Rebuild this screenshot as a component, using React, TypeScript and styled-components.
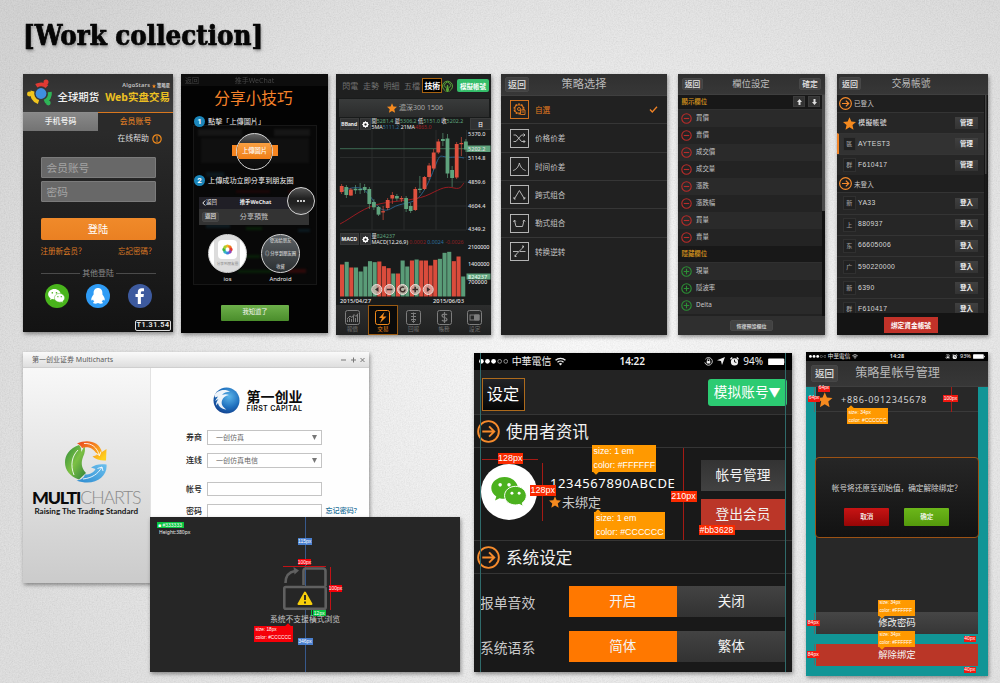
import React from "react";
import styled, { createGlobalStyle, css } from "styled-components";

const Global = createGlobalStyle`
  *, *::before, *::after { box-sizing: border-box; }
  html, body { margin: 0; padding: 0; }
  body {
    font-family: "Noto Sans", "Noto Sans CJK SC", sans-serif;
    line-height: 1;
    color: #ddd;
    white-space: nowrap;
    overflow: hidden;
    background: #d6d6d6;
  }
  svg { display: block; flex: none; }
  h1, h2, p { margin: 0; font-weight: 400; }
`;

/* ---------- page ---------- */

const Page = styled.main`
  position: relative;
  width: 1000px;
  height: 683px;
  overflow: hidden;
  background:
    radial-gradient(ellipse 640px 560px at 58% 48%, rgba(255, 255, 255, 0.85), rgba(255, 255, 255, 0) 100%),
    linear-gradient(170deg, #cccccc 0%, #d8d8d8 50%, #dcdcdc 100%);
`;
const Grain = styled.svg`
  position: absolute;
  inset: 0;
`;
const Board = styled.div`
  position: relative;
  padding: 22px 12px 0 23px;
`;
const Title = styled.h1`
  height: 52px;
  padding-top: 2px;
  font: 700 27px/24px "DejaVu Serif Condensed", "DejaVu Serif", serif;
  font-stretch: condensed;
  color: #060606;
  -webkit-text-stroke: 0.7px #060606;
  text-shadow: 1px 2px 3px rgba(0, 0, 0, 0.35);
  span { display: inline-block; transform: scaleX(1.016); transform-origin: 0 0; }
`;
const Row = styled.div<{ $h: number }>`
  display: flex;
  align-items: flex-start;
  height: ${(p) => p.$h}px;
`;
const Panel = styled.section<{ $w: number; $h: number; $ml?: number; $mt?: number; $bg?: string }>`
  position: relative;
  flex: none;
  display: flex;
  flex-direction: column;
  width: ${(p) => p.$w}px;
  height: ${(p) => p.$h}px;
  margin: ${(p) => p.$mt ?? 0}px 0 0 ${(p) => p.$ml ?? 0}px;
  background: ${(p) => p.$bg ?? "#222"};
  box-shadow: 1px 2px 4px rgba(0, 0, 0, 0.4);
  overflow: hidden;
`;

/* ---------- shared pieces ---------- */

const Bar = styled.header<{ $h: number; $size: number; $pad?: string }>`
  flex: none;
  position: relative;
  display: flex;
  align-items: center;
  justify-content: space-between;
  height: ${(p) => p.$h}px;
  padding: ${(p) => p.$pad ?? "0 4px"};
  background: linear-gradient(#303030, #373737);
  border-bottom: 1px solid #3f3f3f;
  h2 { flex: 1; text-align: center; font-size: ${(p) => p.$size}px; color: #b9b9b9; }
`;
const BarButton = styled.button<{ $w: number; $h: number; $size: number }>`
  flex: none;
  width: ${(p) => p.$w}px;
  height: ${(p) => p.$h}px;
  padding: 0;
  border: 1px solid #474747;
  border-radius: 2px;
  background: #424242;
  color: #e4e4e4;
  font: 500 ${(p) => p.$size}px/1 "Noto Sans CJK TC", sans-serif;
`;
const Tag = styled.span<{ $x: number; $y: number; $w: number; $h: number; $bg?: string; $size?: number }>`
  position: absolute;
  z-index: 3;
  left: ${(p) => p.$x}px;
  top: ${(p) => p.$y}px;
  width: ${(p) => p.$w}px;
  height: ${(p) => p.$h}px;
  display: flex;
  align-items: center;
  justify-content: center;
  background: ${(p) => p.$bg ?? "#f01810"};
  color: #fff;
  font: ${(p) => p.$size ?? 5.5}px/1 "Liberation Sans", sans-serif;
`;
const Tip = styled.div<{ $x: number; $y: number; $w: number; $h: number; $size: number; $bg?: string; $tail?: "up" | "down"; $tx?: number }>`
  position: absolute;
  z-index: 3;
  left: ${(p) => p.$x}px;
  top: ${(p) => p.$y}px;
  width: ${(p) => p.$w}px;
  height: ${(p) => p.$h}px;
  padding: 0 2px;
  display: flex;
  flex-direction: column;
  justify-content: space-around;
  background: ${(p) => p.$bg ?? "#ff9900"};
  color: #fff;
  font: ${(p) => p.$size}px/1 "Liberation Sans", sans-serif;
  &::after {
    content: "";
    position: absolute;
    left: ${(p) => p.$tx ?? 2}px;
    ${(p) => (p.$tail === "down" ? "bottom: -2px;" : "top: -2px;")}
    width: 4px;
    height: 4px;
    background: inherit;
    transform: rotate(45deg);
  }
`;
const Rule = styled.i<{ $x: number; $y: number; $len: number; $v?: boolean; $c?: string }>`
  position: absolute;
  z-index: 2;
  left: ${(p) => p.$x}px;
  top: ${(p) => p.$y}px;
  background: ${(p) => p.$c ?? "#a51a14"};
  ${(p) => (p.$v ? css`width: 1px; height: ${p.$len}px;` : css`height: 1px; width: ${p.$len}px;`)}
`;

const Star = ({ s, c = "#f58a1f" }: { s: number; c?: string }) => (
  <svg width={s} height={s} viewBox="0 0 24 24">
    <path fill={c} d="M12 0.5 15.4 8.4 24 9.2 17.5 14.9 19.4 23.5 12 19 4.6 23.5 6.5 14.9 0 9.2 8.6 8.4Z" />
  </svg>
);
const ArrowRing = ({ s, w = 2 }: { s: number; w?: number }) => (
  <svg width={s} height={s} viewBox="0 0 24 24" fill="none" stroke="#f68b2c" strokeWidth={w}>
    <circle cx="12" cy="12" r="10.8" />
    <path d="M5.5 12H18M12.6 6.6 18 12l-5.4 5.4" />
  </svg>
);
const WeChat = ({ s, bubble, eye }: { s: number; bubble: string; eye: string }) => (
  <svg width={s} height={s * 0.82} viewBox="0 0 36 30">
    <path fill={bubble} d="M13.5 0C6 0 0 5 0 11.2c0 3.600 2 6.600 5.100 8.600L3.800 23.800l4.600-2.300c1.600.4 3.300.6 5.100.6C21 22.100 27 17.200 27 11.200S21 0 13.500 0Z" />
    <circle cx="9" cy="8" r="1.800" fill={eye} />
    <circle cx="18" cy="8" r="1.800" fill={eye} />
    <path fill={bubble} stroke={eye} strokeWidth="1" d="M24.500 9.500C18.200 9.500 13.500 13.800 13.500 19s4.700 9.400 11 9.400c1.400 0 2.700-.2 3.900-.6l4.100 2-1.100-3.400C34 24.700 35.600 22 35.600 19c0-5.200-4.800-9.500-11.100-9.500Z" />
    <circle cx="21" cy="16.500" r="1.500" fill={eye} />
    <circle cx="28.300" cy="16.500" r="1.500" fill={eye} />
  </svg>
);
const Wifi = ({ s }: { s: number }) => (
  <svg width={s} height={s * 0.8} viewBox="0 0 20 16" fill="none" stroke="#eee" strokeWidth="2.400">
    <path d="M1 6a13 13 0 0 1 18 0M4.500 9.600a8 8 0 0 1 11 0" />
    <path d="M10 15.500 7 12.400a4.500 4.500 0 0 1 6 0Z" fill="#eee" stroke="none" />
  </svg>
);
const LockRing = ({ s }: { s: number }) => (
  <svg width={s} height={s} viewBox="0 0 20 20" fill="none" stroke="#eee" strokeWidth="1.800">
    <path d="M3 5a8.500 8.500 0 1 1-1.200 7" />
    <path d="M7.500 9V7a2.500 2.500 0 0 1 5 0v2" />
    <path d="M6 9h8v5.500H6z" fill="#eee" stroke="none" />
  </svg>
);
const Alarm = ({ s }: { s: number }) => (
  <svg width={s} height={s} viewBox="0 0 20 20">
    <circle cx="10" cy="11" r="8" fill="#eee" />
    <path d="M10 6v5l4 1" fill="none" stroke="#000" strokeWidth="2" />
    <path d="M1 5l4-4M19 5l-4-4" stroke="#eee" strokeWidth="3" />
  </svg>
);
const Signal = ({ s }: { s: number }) => (
  <svg width={s * 6.200} height={s} viewBox="0 0 62 10">
    {[0, 1, 2, 3, 4].map((i) => (
      <circle key={i} cx={5 + i * 13} cy="5" r={i < 3 ? 5 : 4} fill={i < 3 ? "#fff" : "none"} stroke={i < 3 ? "none" : "#aaa"} strokeWidth="1.800" />
    ))}
  </svg>
);
const Battery = ({ w }: { w: number }) => (
  <svg width={w} height={w * 0.42} viewBox="0 0 40 17">
    <rect x="0" y="1" width="36" height="15" rx="2" fill="#fff" />
    <path d="M37.500 5.500v6l2.500-1.500v-3z" fill="#fff" />
  </svg>
);

/* ---------- 1: login ---------- */

const LoginHead = styled.div`
  height: 38px;
  display: flex;
  padding: 5px 3px 0 4px;
  background: linear-gradient(#303030, #3c3c3c);
`;
const LoginBrand = styled.div`
  flex: 1;
  padding: 3px 0 0 4.500px;
`;
const Algo = styled.p`
  display: flex;
  justify-content: flex-end;
  align-items: center;
  gap: 1.500px;
  height: 7px;
  font-size: 5.600px;
  font-weight: 600;
  letter-spacing: 0.200px;
  color: #c4c4c4;
  small { font-size: 4.300px; letter-spacing: 0; }
`;
const BrandLine = styled.p`
  display: flex;
  justify-content: space-between;
  align-items: center;
  height: 16px;
  font-size: 10.400px;
  color: #f2f2f2;
  font-weight: 500;
  b { font-size: 10.500px; font-weight: 700; color: #ecc022; }
`;
const Tabs = styled.div`
  display: flex;
  height: 19px;
`;
const LoginTab = styled.span<{ $on?: boolean }>`
  flex: 1;
  display: flex;
  align-items: center;
  justify-content: center;
  font-size: 7.900px;
  font-weight: 500;
  color: ${(p) => (p.$on ? "#d97a25" : "#f2f2f2")};
  background: ${(p) => (p.$on ? "#2a2a2a" : "linear-gradient(#888, #737373)")};
  border-top: ${(p) => (p.$on ? "1px solid #d9771e" : "1px solid #8c8c8c")};
`;
const HelpLine = styled.p`
  display: flex;
  align-items: center;
  justify-content: flex-end;
  gap: 3px;
  height: 16px;
  padding-right: 11px;
  font-size: 7.900px;
  color: #ddd;
`;
const LoginForm = styled.div`
  display: flex;
  flex-direction: column;
  padding: 10px 17.500px 0;
`;
const LoginInput = styled.div`
  height: 21px;
  margin-bottom: 3px;
  padding: 1px 5px 0;
  display: flex;
  align-items: center;
  font-size: 10.700px;
  color: #a4a4a4;
  background: #686868;
  border: 1px solid #7b7b7b;
  border-radius: 1px;
`;
const LoginButton = styled.button`
  height: 21.500px;
  margin-top: 13px;
  border: 0;
  padding: 0;
  border-radius: 2px;
  background: linear-gradient(#f08a2a, #ea8022);
  color: #fff;
  font: 10.200px/1 "Noto Sans CJK SC", sans-serif;
`;
const LoginLinks = styled.p`
  display: flex;
  justify-content: space-between;
  margin-top: 8px;
  font-size: 7.500px;
  color: #dd7a24;
`;
const OrLine = styled.p`
  display: flex;
  align-items: center;
  gap: 2px;
  margin-top: 15px;
  font-size: 7.900px;
  color: #8a8a8a;
  &::before, &::after { content: ""; flex: 1; height: 1px; background: #4b4b4b; }
`;
const SocialRow = styled.div`
  display: flex;
  justify-content: space-between;
  padding: 6px 4px 0;
`;
const Social = styled.span<{ $bg: string }>`
  width: 24px;
  height: 24px;
  border-radius: 50%;
  display: grid;
  place-items: center;
  background: ${(p) => p.$bg};
`;
const Version = styled.span`
  align-self: flex-end;
  margin: auto 2px 1px 0;
  width: 36px;
  height: 11px;
  display: grid;
  place-items: center;
  border: 1px solid #ddd;
  border-radius: 2px;
  font: 600 7.200px/1 Roboto, sans-serif;
  letter-spacing: 0.500px;
  color: #eee;
`;

const LoginPanel = () => (
  <Panel $w={150} $h={257.500} $bg="linear-gradient(#323232, #262626 35%, #131313)">
    <LoginHead>
      <svg width="26" height="27" viewBox="0 0 26 27" fill="none" strokeWidth="4">
        <circle cx="14" cy="14.500" r="5.400" fill="#3f8fe0" />
        <path d="M9.300 6.800a9 9 0 0 1 10.700.800" stroke="#e03a34" />
        <path d="M22.800 13a9 9 0 0 1-5.300 9.600" stroke="#2fb457" />
        <path d="M11.500 23A9 9 0 0 1 5.500 12" stroke="#f0c41e" />
        <circle cx="19" cy="2.900" r="2.500" fill="#e03a34" />
        <circle cx="21.300" cy="24" r="2.400" fill="#2fb457" />
        <circle cx="2.400" cy="15" r="2.400" fill="#f0c41e" />
      </svg>
      <LoginBrand>
        <Algo>AlgoStars <Star s={4} /> <small>策略星</small></Algo>
        <BrandLine>全球期货 <b>Web实盘交易</b></BrandLine>
      </LoginBrand>
    </LoginHead>
    <Tabs>
      <LoginTab>手机号码</LoginTab>
      <LoginTab $on>会员账号</LoginTab>
    </Tabs>
    <HelpLine>
      在线帮助
      <svg width="10" height="10" viewBox="0 0 10 10" fill="none" stroke="#f08a1c" strokeWidth="1.200">
        <circle cx="5" cy="5" r="4.200" />
        <path d="M5 2.200v3.500M5 6.600v1.200" />
      </svg>
    </HelpLine>
    <LoginForm>
      <LoginInput>会员账号</LoginInput>
      <LoginInput>密码</LoginInput>
      <LoginButton>登陆</LoginButton>
      <LoginLinks><span>注册新会员？</span><span>忘記密碼？</span></LoginLinks>
      <OrLine>其他登陆</OrLine>
      <SocialRow>
        <Social $bg="#49b41c"><WeChat s={17} bubble="#fff" eye="#49b41c" /></Social>
        <Social $bg="#2e9bf5">
          <svg width="14" height="16" viewBox="0 0 14 16" fill="#fff">
            <path d="M7 0C4 0 2.600 2.300 2.600 5v1.600C1.300 8.400 0 10.200.3 12c.2.900 1 .3 1.700-.6.200.9.700 1.600 1.400 2.200-.9.300-1.400.9-1.200 1.500.3.900 3.300.8 4.800 0 1.500.8 4.500.9 4.800 0 .2-.6-.3-1.200-1.200-1.500.700-.600 1.200-1.300 1.400-2.200.700.900 1.500 1.500 1.700.6.300-1.800-1-3.600-2.300-5.400V5C11.400 2.300 10 0 7 0Z" />
          </svg>
        </Social>
        <Social $bg="#3d5a9e">
          <svg width="10" height="16" viewBox="0 0 10 16" fill="#fff">
            <path d="M2.800 16V9H.5V6h2.300V4.300C2.800 1.600 4.300.3 6.600.3 7.700.3 8.700.4 9 .4v2.900H7.400C6.200 3.300 5.900 3.900 5.900 4.700V6h3L8.500 9H5.900v7Z" />
          </svg>
        </Social>
      </SocialRow>
    </LoginForm>
    <Version>T1.31.54</Version>
  </Panel>
);

/* ---------- 2: share tutorial ---------- */

const GhostBar = styled.div`
  height: 12px;
  display: grid;
  grid-template-columns: 1fr auto 1fr;
  align-items: center;
  padding: 0 4px;
  font-size: 7px;
  color: #444;
  background: #0d0d0d;
  filter: blur(0.400px);
`;
const GhostCard = styled.div`
  position: absolute;
  left: 12px;
  top: 51px;
  width: 124px;
  height: 160px;
  border: 1.500px solid #171717;
  background: #080808;
`;
const GhostPart = styled.i<{ $x: number; $y: number; $w: number; $h: number; $c: string }>`
  position: absolute;
  left: ${(p) => p.$x}px;
  top: ${(p) => p.$y}px;
  width: ${(p) => p.$w}px;
  height: ${(p) => p.$h}px;
  background: ${(p) => p.$c};
  filter: blur(0.800px);
`;
const ShareTitle = styled.h2`
  position: relative;
  height: 29.500px;
  text-align: center;
  font-size: 15.700px;
  line-height: 25px;
  color: #f5822a;
  padding-right: 2px;
`;
const Step = styled.p`
  position: relative;
  display: flex;
  align-items: center;
  gap: 3px;
  height: 12px;
  margin-left: 13px;
  font-size: 7.150px;
  color: #f2f2f2;
  font-family: "Noto Sans CJK TC", sans-serif;
`;
const StepNo = styled.b`
  width: 11px;
  height: 11px;
  border-radius: 50%;
  display: grid;
  place-items: center;
  background: #1b86bb;
  color: #fff;
  font: 700 8px/1 Roboto, sans-serif;
`;
const Lens = styled.div<{ $d: number; $bg?: string }>`
  position: relative;
  flex: none;
  width: ${(p) => p.$d}px;
  height: ${(p) => p.$d}px;
  border: 1.300px solid #d5d5d5;
  border-radius: 50%;
  overflow: hidden;
  display: flex;
  flex-direction: column;
  align-items: center;
  justify-content: center;
  background: ${(p) => p.$bg ?? "linear-gradient(#666, #1c1c1c 40%, #0a0a0a)"};
`;
const UploadRow = styled.div`
  position: relative;
  height: 47px;
  display: flex;
  align-items: center;
  justify-content: center;
  &::before {
    content: "";
    position: absolute;
    left: 51px;
    top: 17px;
    width: 46px;
    height: 11px;
    background: #f5841f;
  }
`;
const UploadLabel = styled.span`
  width: 38px;
  height: 16px;
  display: grid;
  place-items: center;
  background: linear-gradient(#f9a042, #f07f18);
  color: #fff;
  font: 500 6.300px/1 "Noto Sans CJK TC", sans-serif;
`;
const ChatPreview = styled.div`
  position: relative;
  width: 110px;
  margin: 10px 0 0 18px;
  background: #333;
`;
const ChatTop = styled.div`
  height: 12px;
  display: grid;
  grid-template-columns: 30px 1fr 30px;
  align-items: center;
  padding-left: 3px;
  background: #201f26;
  font-size: 5.400px;
  color: #eee;
  text-align: center;
  span { text-align: left; display: flex; }
`;
const ChatSub = styled.div`
  height: 16px;
  display: grid;
  grid-template-columns: 17px 1fr 17px;
  align-items: center;
  padding: 0 3px;
  text-align: center;
  font-size: 7.100px;
  color: #c2c2c2;
`;
const MoreLens = styled.div`
  position: absolute;
  right: -6px;
  top: -10px;
`;
const LensRow = styled.div`
  position: relative;
  display: flex;
  gap: 14px;
  margin: 9px 0 0 27px;
`;
const LensItem = styled.div`
  width: 39px;
  display: flex;
  flex-direction: column;
  align-items: center;
  gap: 4px;
  font-size: 5.900px;
  color: #eee;
`;
const LensLine = styled.span<{ $c: string }>`
  display: block;
  height: 13px;
  line-height: 13px;
  font-size: 4.300px;
  color: ${(p) => p.$c};
`;
const LensCaption = styled.span`
  display: block;
  height: 7px;
  padding-top: 2px;
  line-height: 5px;
  font-size: 3.600px;
  color: #888;
`;
const GreenButton = styled.button<{ $w: number; $h: number; $size: number }>`
  width: ${(p) => p.$w}px;
  height: ${(p) => p.$h}px;
  padding: 0;
  border: 0;
  border-radius: 1px;
  background: linear-gradient(#6db04a, #4a8d2b);
  color: #f5f5f5;
  font: ${(p) => p.$size}px/1 "Noto Sans CJK SC", sans-serif;
`;
const ShareFoot = styled.div`
  position: relative;
  margin: 18px 0 0 40px;
`;

const SharePanel = () => (
  <Panel $w={147} $h={259} $ml={8} $bg="#030303">
    <GhostBar><span>返回</span><span>推手WeChat</span><span /></GhostBar>
    <GhostCard>
      <GhostPart $x={4} $y={3} $w={44} $h={7} $c="#161616" />
      <GhostPart $x={80} $y={3} $w={36} $h={7} $c="#161616" />
      <GhostPart $x={7} $y={12} $w={108} $h={25} $c="#101010" />
      <GhostPart $x={12} $y={46} $w={18} $h={5} $c="#0c181d" />
      <GhostPart $x={42} $y={64} $w={34} $h={3} $c="#1c0708" />
      <GhostPart $x={94} $y={64} $w={16} $h={3} $c="#220808" />
      <GhostPart $x={12} $y={98} $w={24} $h={4} $c="#0e1a20" />
      <GhostPart $x={52} $y={101} $w={16} $h={3} $c="#092009" />
      <GhostPart $x={104} $y={103} $w={12} $h={3} $c="#0c1a21" />
      <GhostPart $x={52} $y={129} $w={14} $h={3} $c="#092009" />
      <GhostPart $x={44} $y={144} $w={34} $h={3} $c="#092009" />
      <GhostPart $x={94} $y={143} $w={18} $h={4} $c="#2e0a0a" />
    </GhostCard>
    <ShareTitle>分享小技巧</ShareTitle>
    <Step><StepNo>1</StepNo>點擊「上傳圖片」</Step>
    <UploadRow><Lens $d={37}><UploadLabel>上傳圖片</UploadLabel></Lens></UploadRow>
    <Step><StepNo>2</StepNo>上傳成功立即分享到朋友圈</Step>
    <ChatPreview>
      <ChatTop>
        <span>
          <svg width="4" height="6" viewBox="0 0 4 6" fill="none" stroke="#eee"><path d="M3.200.5.800 3l2.400 2.500" /></svg>
          返回
        </span>
        <b>推手WeChat</b>
      </ChatTop>
      <ChatSub><BarButton $w={17} $h={10} $size={5.500}>返回</BarButton>分享預覽</ChatSub>
      <MoreLens>
        <Lens $d={28.500} $bg="linear-gradient(#555, #222 40%, #222 60%, #444)">
          <svg width="8" height="2" viewBox="0 0 8 2" fill="#fff"><circle cx="1" cy="1" r="1" /><circle cx="4" cy="1" r="1" /><circle cx="7" cy="1" r="1" /></svg>
        </Lens>
      </MoreLens>
    </ChatPreview>
    <LensRow>
      <LensItem>
        <Lens $d={39} $bg="linear-gradient(90deg, #fff 0 5px, #dcdcdc 5px 31px, #fff 31px)">
          <svg width="19" height="19" viewBox="0 0 19 19">
            <rect width="19" height="19" rx="4" fill="#fff" />
            {["#f6b51e", "#ef7f1f", "#e33b30", "#9046b8", "#3f7de0", "#32b5c8", "#42b449", "#a9cf2c"].map((c, i) => (
              <ellipse key={c} cx="9.500" cy="6" rx="1.900" ry="1.600" fill={c} transform={`rotate(${i * 45} 9.500 9.500)`} />
            ))}
          </svg>
          <LensCaption>分享到朋友圈</LensCaption>
        </Lens>
        ios
      </LensItem>
      <LensItem>
        <Lens $d={39} $bg="linear-gradient(#5c6165, #2b2f31)">
          <LensLine $c="#ddd">發送給朋友</LensLine>
          <LensLine $c="#eee">◎ 分享到朋友圈</LensLine>
          <LensLine $c="#ddd">收藏</LensLine>
        </Lens>
        Android
      </LensItem>
    </LensRow>
    <ShareFoot><GreenButton $w={68} $h={16} $size={6.300}>我知道了</GreenButton></ShareFoot>
  </Panel>
);

/* ---------- 3: trading chart ---------- */

const UP = "#e0513f";
const DOWN = "#5fa37d";
const ChartNav = styled.div`
  display: flex;
  align-items: center;
  height: 24px;
  padding: 0 2px 0 4px;
  font-size: 8px;
  color: #6f6f6f;
  background: #1f2020;
`;
const NavItem = styled.span<{ $on?: boolean }>`
  width: ${(p) => (p.$on ? 20 : 20.600)}px;
  height: 15px;
  display: flex;
  align-items: center;
  justify-content: center;
  ${(p) => p.$on && css`color: #fff; font-weight: 600; background: #000; border: 1px solid #a8620f;`}
`;
const AccountChip = styled.span`
  width: 32px;
  height: 13px;
  margin-left: auto;
  display: grid;
  place-items: center;
  border-radius: 2px;
  background: #33bd69;
  color: #fff;
  font: 700 6.500px/1 "Noto Sans CJK TC", sans-serif;
`;
const SymbolBar = styled.div`
  height: 18px;
  margin: 1px 2px 0 3px;
  display: flex;
  align-items: center;
  justify-content: center;
  gap: 2px;
  padding-left: 2px;
  background: linear-gradient(#393b3b, #2b2c2c);
  color: #a8a8a8;
  font-size: 7px;
`;
const Readout = styled.div`
  height: 12.500px;
  margin: 1.500px 0 0 3.500px;
  display: flex;
  align-items: center;
  gap: 1px;
  font-size: 5.800px;
`;
const ReadBox = styled.span<{ $w: number }>`
  width: ${(p) => p.$w}px;
  height: 12px;
  display: grid;
  place-items: center;
  background: #303132;
  border: 1px solid #3a3b3b;
  color: #eee;
  font: 700 5px/1 Inter, "Noto Sans CJK TC", sans-serif;
`;
const ReadText = styled.div`
  flex: 1;
  font: 5.300px/6.200px "Noto Sans", "Noto Sans CJK TC", sans-serif;
  color: #eee;
`;
const Val = styled.span<{ $c: string }>`
  color: ${(p) => p.$c};
`;
const Plot = styled.div<{ $h: number }>`
  height: ${(p) => p.$h}px;
  padding-left: 4px;
  svg { overflow: visible; }
`;
const Dates = styled.div`
  display: flex;
  justify-content: space-between;
  height: 8px;
  padding: 1px 27px 0 4px;
  font: 500 5.800px/6px "Noto Sans", sans-serif;
  color: #e4e4e4;
`;
const BottomNav = styled.nav`
  display: flex;
  height: 30px;
  margin-top: auto;
  padding: 0 1px;
  background: linear-gradient(#2c2d2d, #202121);
`;
const NavCell = styled.span<{ $on?: boolean }>`
  flex: 1;
  display: flex;
  flex-direction: column;
  align-items: center;
  padding-top: 4px;
  gap: 2px;
  font-size: 5.600px;
  color: ${(p) => (p.$on ? "#f08a1c" : "#727272")};
  background: ${(p) => (p.$on ? "#0a0a0a" : "none")};
  border: 1px solid ${(p) => (p.$on ? "#9a5a12" : "transparent")};
  svg { color: ${(p) => (p.$on ? "#f08a1c" : "#7d7d7d")}; }
`;
const Gear = () => (
  <svg width="7" height="7" viewBox="0 0 7 7"><circle cx="3.500" cy="3.500" r="2" fill="none" stroke="#fff" strokeWidth="1.500" /><path d="M3.500 0v7M0 3.500h7M1 1l5 5M6 1 1 6" stroke="#fff" strokeWidth=".7" /><circle cx="3.500" cy="3.500" r="1.100" fill="#222" /></svg>
);

/* [top, bottom, wickTop, wickBottom, rising] */
const candles: [number, number, number, number, boolean][] = [
  [56, 62, 54, 64, true], [57, 65, 55, 68, false], [59.500, 65.500, 58, 66, true], [58.700, 60.300, 55, 64, false],
  [59, 60.200, 53, 64, false], [57, 60, 54, 63, false], [59, 74, 57, 79, false], [72, 77.300, 69, 80, false],
  [77, 84.600, 76, 86, false], [81.200, 82.400, 76, 90, true], [70, 78, 68, 80, true], [65, 68.500, 62, 74, true],
  [66, 68.500, 64, 71, false], [68, 69.400, 66, 72, true], [68, 79, 66, 82, false], [76, 81, 73, 83, false],
  [59, 80, 57, 81, true], [58.700, 60, 46, 63, false], [47, 59, 46, 60, true], [35.500, 47, 33, 50, true],
  [22.500, 38.500, 19, 40, true], [11.500, 22.500, 9, 24, true], [9, 11, 3, 16, false], [8.500, 43.500, 4, 48, false],
  [40, 48, 36, 57, false], [14, 47.500, 12, 49, true], [13, 14.200, 7, 26, true], [11.500, 19.500, 9, 22, false],
];
const volumes: [number, boolean][] = [
  [192, true], [184, false], [201, true], [201, false], [213, false], [198, false], [182, false], [185, false], [183, true],
  [197, true], [203, true], [219, false], [219, true], [180, false], [198, false], [180, true], [177, false], [180, true],
  [180, true], [195, true], [178, true], [175, false], [157, false], [154, false], [182, true], [168, true], [228, false],
];
const AxisText = ({ y, children, fill = "#dedede" }: { y: number; children: string; fill?: string }) => (
  <text x="128" y={y} fontSize="5.600" fill={fill} textLength={children.length > 6 ? 21.500 : undefined} fontFamily="Noto Sans" fontWeight="500">{children}</text>
);

const ChartPanel = () => (
  <Panel $w={155} $h={260.500} $ml={8} $bg="#191b1b">
    <ChartNav>
      <NavItem>閃電</NavItem><NavItem>走勢</NavItem><NavItem>明細</NavItem><NavItem>五檔</NavItem><NavItem $on>技術</NavItem>
      <svg width="11" height="12" viewBox="0 0 11 12" fill="none" stroke="#5aa637" strokeWidth="1">
        <path d="M3 10.500a5 5 0 1 1 5 0M3.700 7.700a3 3 0 1 1 3.600 0" />
        <path d="M5.500 5v7M4 12l1.500-7L7 12" />
      </svg>
      <AccountChip>模擬帳號</AccountChip>
    </ChartNav>
    <SymbolBar><Star s={10} />滬深300 1506</SymbolBar>
    <Readout>
      <ReadBox $w={19.500}>BBand</ReadBox>
      <ReadBox $w={10.500}><Gear /></ReadBox>
      <ReadText>
        開<Val $c={DOWN}>5281.4</Val> 最<Val $c={DOWN}>5306.2</Val> 低<Val $c={DOWN}>5151.0</Val> 收<Val $c={DOWN}>5202.2</Val><br />
        5MA<Val $c="#2d6f9e">5111.2</Val> 21MA<Val $c="#a01f24">4865.0</Val>
      </ReadText>
      <ReadBox $w={21}>日</ReadBox>
    </Readout>
    <Plot $h={101}>
      <svg width="150" height="101" viewBox="0 0 150 101">
        <g stroke="#2a2c2c" strokeWidth="1">
          <path d="M0 27.500h126M0 52h126M0 76h126M0 100h126M32 0v100M64 0v100M96 0v100M126.500 0v100" />
        </g>
        <path d="M0 18.700h126" stroke="#3d6b53" />
        <path d="M0 62C14 56 22 55 30 66S42 84 52 78 70 75 78 68 92 44 96 34s4-8 10-7 10-1 18 1" fill="none" stroke="#2b5f86" />
        <path d="M0 94C12 88 24 76 44 73S78 70 90 64s16-8 24-6 8-4 10-5" fill="none" stroke="#9a1c22" />
        {candles.map(([t, b, wt, wb, up], i) => (
          <g key={i} fill={up ? UP : DOWN}>
            <rect x={i * 4.600 + 1.300} y={wt} width=".8" height={wb - wt} opacity=".8" />
            <rect x={i * 4.600 - 0.200} y={t} width="3.800" height={b - t} />
          </g>
        ))}
        <AxisText y={5.700}>5370.0</AxisText>
        <rect x="126.500" y="15.500" width="24" height="6.500" fill="#5fa37d" />
        <AxisText y={21}>5202.2</AxisText>
        <AxisText y={29.700}>5114.8</AxisText>
        <AxisText y={54}>4859.6</AxisText>
        <AxisText y={78.300}>4604.4</AxisText>
        <AxisText y={101}>4349.2</AxisText>
      </svg>
    </Plot>
    <Readout>
      <ReadBox $w={19.500}>MACD</ReadBox>
      <ReadBox $w={10.500}><Gear /></ReadBox>
      <ReadText>
        量<Val $c={DOWN}>824237</Val><br />
        MACD(12,26,9) <Val $c="#8c2024">0.0002</Val> <Val $c="#2d6f9e">0.0024</Val> <Val $c="#8c2024">-0.0026</Val>
      </ReadText>
    </Readout>
    <Plot $h={51.500}>
      <svg width="150" height="52" viewBox="0 0 150 52">
        {volumes.map(([t, up], i) => {
          const h = (288 - t) / 3;
          return <rect key={i} x={i * 4.660} y={51.500 - h} width="4.100" height={h} fill={up ? "#d94c3c" : "#5a9c78"} />;
        })}
        <AxisText y={4}>2100000</AxisText>
        <AxisText y={20.500}>1400000</AxisText>
        <AxisText y={39.300}>700000</AxisText>
        <rect x="126.500" y="28.500" width="24" height="6" fill="#5fa37d" />
        <AxisText y={33.500} fill="#e8f8ee">824237</AxisText>
        <g fill="#e6c3bd" fillOpacity=".65" stroke="#f0dedb" strokeWidth="1">
          {[36.800, 49.600, 62.600, 75.200, 88.200].map((x) => <circle key={x} cx={x} cy="44.500" r="5" />)}
        </g>
        <g stroke="#3f2c2a" strokeWidth="1.500" fill="none">
          <path d="M38.500 42v5l-3.500-2.500z" fill="#3f2c2a" stroke="none" />
          <path d="M46.800 44.500h5.600M72.400 44.500H78M75.200 41.700v5.600" />
          <path d="M65 44.500a2.400 2.400 0 1 1-1-2" />
          <path d="M86.800 42v5l3.500-2.500z" fill="#3f2c2a" stroke="none" />
        </g>
      </svg>
    </Plot>
    <Dates><span>2015/04/27</span><span>2015/06/03</span></Dates>
    <BottomNav>
      <NavCell><svg width="15" height="15" viewBox="0 0 15 15" fill="none" stroke="currentColor"><rect x=".5" y=".5" width="14" height="14" rx="2" /><path d="M2.500 12V9.500M4.500 12V8M6.500 12V9M8.500 12V6M10.500 12V8M12.500 12V4M2 9l3-3 2 1.500 2-3 2 2 2-3" /></svg>報價</NavCell>
      <NavCell $on><svg width="15" height="15" viewBox="0 0 15 15" fill="none" stroke="currentColor"><rect x=".5" y=".5" width="14" height="14" rx="2" /><path d="M9.500 2 4 8h3l-2 5 6.500-6.500H8z" fill="currentColor" stroke="none" /></svg>交易</NavCell>
      <NavCell><svg width="15" height="15" viewBox="0 0 15 15" fill="none" stroke="currentColor"><rect x=".5" y=".5" width="14" height="14" rx="2" /><path d="M7.500 2.500v10M5 3.500h5M5 6.500h5M5 9.500h5M5.500 10.500l2 2 2-2" /></svg>回報</NavCell>
      <NavCell><svg width="15" height="15" viewBox="0 0 15 15" fill="none" stroke="currentColor"><rect x=".5" y=".5" width="14" height="14" rx="2" /><path d="M10 5C9.500 3.800 5 3.400 5 5.700S10 7 10 9.300 5.500 11.500 5 9.800M7.500 2v11" strokeWidth="1.200" /></svg>帳務</NavCell>
      <NavCell><svg width="15" height="15" viewBox="0 0 15 15" fill="none" stroke="currentColor"><rect x=".5" y=".5" width="14" height="14" rx="2" /><rect x="3" y="5" width="9" height="5" /><path d="M7.500 5H12v5H7.500z" fill="currentColor" /></svg>設定</NavCell>
    </BottomNav>
  </Panel>
);

/* ---------- 4: strategy list ---------- */

const StrategyRow = styled.div<{ $on?: boolean }>`
  flex: none;
  display: flex;
  align-items: center;
  gap: 6px;
  height: 28.350px;
  padding: 0 9px 0 9px;
  border-bottom: 1px solid #363636;
  font-size: 7.600px;
  font-family: "Noto Sans CJK SC", sans-serif;
  color: ${(p) => (p.$on ? "#e37a1f" : "#c4c4c4")};
  &:last-child { border-bottom: 0; }
  span { flex: 1; }
`;
const strategies: [string, React.ReactNode][] = [
  ["自選", <g key="a"><circle cx="9" cy="9" r="4.900" strokeWidth="1.300" strokeDasharray="1.900 1.180" /><circle cx="9" cy="9" r="4.100" /><circle cx="9" cy="9" r="1.500" /><path d="M10.500 10h4.500v4.500h-4.500zM11.500 12h2.500" fill="#222" /></g>],
  ["价格价差", <path key="b" d="M3.500 6H6l5.500 6.500h3.500M3.500 12.500H6L11.500 6h3.500M13.500 4.500 15 6l-1.500 1.500M13.500 11l1.500 1.500-1.500 1.500" />],
  ["时间价差", <path key="c" d="M3.200 13.500c3-1 5-3 6.200-7.500C10.500 10.500 12.600 12.500 15.600 13.500" />],
  ["跨式组合", <path key="d" d="M4.300 14 9.400 5.500 14.500 14M4 12v2h1.600M14.800 12v2h-1.600" />],
  ["勒式组合", <path key="e" d="M4.500 6.500 6 12.500h6.500L14 6.500M3.500 8l1-2 1.300 1.500M13 7.500 14 6l1.200 1.500" />],
  ["转换逆转", <path key="f" d="M3 9.500h5.500M10 9.500h5.500M5 14.500l1.500-2.500L12 6.500 13.500 4M5 12.800v1.700h1.500M12 4h1.500v1.500" />],
];
const StrategyPanel = () => (
  <Panel $w={166} $h={261} $ml={10} $bg="#212121">
    <Bar $h={22} $size={11.200} $pad="0 28px 1px 4px">
      <BarButton $w={24} $h={15} $size={9}>返回</BarButton>
      <h2>策略选择</h2>
    </Bar>
    {strategies.map(([name, icon], i) => (
      <StrategyRow key={name} $on={i === 0}>
        <svg width="19" height="19" viewBox="0 0 19 19" fill="none" stroke="currentColor" strokeWidth=".9">
          <rect x=".5" y=".5" width="18" height="18" />
          {icon}
        </svg>
        <span>{name}</span>
        {i === 0 && <svg width="9" height="7" viewBox="0 0 9 7" fill="none" stroke="#f08326" strokeWidth="1.300"><path d="M1 3.500 3.300 6 8 .8" /></svg>}
      </StrategyRow>
    ))}
  </Panel>
);

/* ---------- 5: column settings ---------- */

const FieldBody = styled.div`
  flex: 1;
  min-height: 0;
  padding-right: 3px;
  background: linear-gradient(#4a4a4a 0 116px, #111 116px) right / 3px 100% no-repeat;
`;
const FieldHead = styled.div<{ $h: number }>`
  display: flex;
  align-items: center;
  gap: 3px;
  height: ${(p) => p.$h}px;
  padding: 0 2px 0 3.500px;
  background: #181818;
  border-bottom: 1px solid #303030;
  color: #dd981e;
  font: 500 6.400px/1 "Noto Sans CJK TC", sans-serif;
  span { flex: 1; }
`;
const SortButton = styled.i`
  width: 12px;
  height: 11px;
  display: grid;
  place-items: center;
  background: #333;
  border: 1px solid #3c3c3c;
`;
const FieldRow = styled.div<{ $alt: boolean }>`
  display: flex;
  align-items: center;
  gap: 4px;
  height: 17.030px;
  padding-left: 3px;
  background: ${(p) => (p.$alt ? "#232323" : "#2a2a2a")};
  font: 6.400px/1 "Noto Sans", "Noto Sans CJK TC", sans-serif;
  color: #c6c6c6;
`;
const FieldFoot = styled.div`
  height: 19px;
  display: grid;
  place-items: center;
  background: #2f2f2f;
`;
const Toggle = ({ plus }: { plus?: boolean }) => (
  <svg width="11" height="11" viewBox="0 0 11 11" fill="none" stroke={plus ? "#2c8f35" : "#b82c2a"} strokeWidth="1.100">
    <circle cx="5.500" cy="5.500" r="4.700" />
    <path d={plus ? "M2.800 5.500h5.400M5.500 2.800v5.400" : "M2.800 5.500h5.400"} />
  </svg>
);
const shown = ["買價", "賣價", "成交價", "成交量", "漲跌", "漲跌幅", "買量", "賣量"];
const hidden = ["現量", "隱波率", "Delta"];
const FieldPanel = () => (
  <Panel $w={147} $h={261} $ml={11} $bg="#222">
    <Bar $h={21} $size={9.400} $pad="0 4px 1px">
      <BarButton $w={21} $h={12} $size={7.800}>返回</BarButton>
      <h2>欄位設定</h2>
      <BarButton $w={22} $h={12} $size={7.800}>確定</BarButton>
    </Bar>
    <FieldBody>
      <FieldHead $h={14.700}>
        <span>顯示欄位</span>
        <SortButton><svg width="5" height="6" viewBox="0 0 5 6" fill="#ddd"><path d="M2.500 0 5 3H3.500v3h-2V3H0z" /></svg></SortButton>
        <SortButton><svg width="5" height="6" viewBox="0 0 5 6" fill="#ddd"><path d="M2.500 6 0 3h1.500V0h2v3H5z" /></svg></SortButton>
      </FieldHead>
      {shown.map((n, i) => <FieldRow key={n} $alt={i % 2 === 1}><Toggle />{n}</FieldRow>)}
      <FieldHead $h={17}><span>隱藏欄位</span></FieldHead>
      {hidden.map((n, i) => <FieldRow key={n} $alt={i % 2 === 1}><Toggle plus />{n}</FieldRow>)}
    </FieldBody>
    <FieldFoot><BarButton $w={43} $h={11} $size={5}>恢復預設欄位</BarButton></FieldFoot>
  </Panel>
);

/* ---------- 6: accounts ---------- */

const AccountList = styled.div`
  flex: 1;
  min-height: 0;
  overflow: hidden;
  padding-right: 4px;
  background: linear-gradient(#454545 0 79px, #1c1c1c 79px) right 2px top 0 / 1.500px 100% no-repeat, #151515;
`;
const AccountHead = styled.div`
  display: flex;
  align-items: center;
  gap: 2px;
  height: 17px;
  padding-left: 2px;
  background: #1f1f1f;
  font: 6.600px/1 "Noto Sans CJK TC", sans-serif;
  color: #c8c8c8;
`;
const AccountRow = styled.div<{ $on?: boolean }>`
  display: flex;
  align-items: center;
  height: 21.150px;
  padding: 0 6px 0 ${(p) => (p.$on ? 4 : 6)}px;
  background: ${(p) => (p.$on ? "#323232" : "#262626")};
  border-top: 1px solid #343434;
  ${(p) => p.$on && css`border-left: 2px solid #f08326;`}
  font: 500 6.800px/1 "Liberation Sans", "Noto Sans CJK TC", sans-serif;
  letter-spacing: 0.350px;
  color: #d8d8d8;
  > span { flex: 1; }
`;
const Badge = styled.i`
  width: 13px;
  height: 14px;
  margin-right: 2px;
  display: grid;
  place-items: center;
  border: 1px solid #303030;
  background: #212121;
  font-style: normal;
  font-size: 6px;
  color: #999;
`;
const RowAction = styled.button`
  width: 23px;
  height: 11.500px;
  padding: 0;
  border: 0;
  background: linear-gradient(#404040, #333);
  color: #eee;
  font: 700 6.400px/1 "Noto Sans CJK TC", sans-serif;
`;
const AccountFoot = styled.div`
  height: 22px;
  display: flex;
  align-items: center;
  padding: 2px 0 0 47px;
  background: #141414;
`;
const RedButton = styled.button`
  width: 54px;
  height: 15.500px;
  padding: 0;
  border: 0;
  background: #c23229;
  color: #fff;
  font: 600 6.700px/1 "Noto Sans CJK TC", sans-serif;
`;
const accountsOut: [string, string][] = [["新", "YA33"], ["上", "880937"], ["东", "66605006"], ["广", "590220000"], ["新", "6390"], ["群", "F610417"]];
const AccountPanel = () => (
  <Panel $w={151} $h={261} $ml={12} $bg="#151515">
    <Bar $h={21} $size={9.700} $pad="0 27px 1px 2px">
      <BarButton $w={22} $h={13} $size={8}>返回</BarButton>
      <h2>交易帳號</h2>
    </Bar>
    <AccountList>
      <AccountHead><ArrowRing s={13} w={2.200} />已登入</AccountHead>
      <AccountRow><Star s={13} /><span>&nbsp;模擬帳號</span><RowAction>管理</RowAction></AccountRow>
      <AccountRow $on><Badge>區</Badge><span>AYTEST3</span><RowAction>管理</RowAction></AccountRow>
      <AccountRow><Badge>群</Badge><span>F610417</span><RowAction>管理</RowAction></AccountRow>
      <AccountHead><ArrowRing s={13} w={2.200} />未登入</AccountHead>
      {accountsOut.map(([b, n]) => <AccountRow key={n}><Badge>{b}</Badge><span>{n}</span><RowAction>登入</RowAction></AccountRow>)}
    </AccountList>
    <AccountFoot><RedButton>綁定資金帳號</RedButton></AccountFoot>
  </Panel>
);

/* ---------- 7: desktop login window ---------- */

const WindowBar = styled.div`
  flex: none;
  display: flex;
  align-items: center;
  height: 15.500px;
  padding: 1px 4px 0 9px;
  background: linear-gradient(#fafafa, #dedede);
  border-bottom: 1px solid #cfcfcf;
  color: #5a5a5a;
  font-size: 7px;
  svg { margin-left: auto; }
`;
const WindowBody = styled.div`
  flex: 1;
  display: flex;
`;
const BrandSide = styled.div`
  width: 127.500px;
  padding-top: 73px;
  display: flex;
  flex-direction: column;
  align-items: center;
  background: linear-gradient(#f8f8f8, #cbcbcb);
  border-right: 1px solid #e2e2e2;
`;
const BrandName = styled.p`
  margin-top: 5px;
  font: 300 17.800px/18px Lato, sans-serif;
  color: #8c8c8c;
  letter-spacing: -1.150px;
  b { font-weight: 900; color: #0a0a0a; }
`;
const BrandTag = styled.p`
  font: 700 8.100px/10px Lato, sans-serif;
  color: #151515;
`;
const FormSide = styled.div`
  flex: 1;
  padding: 19px 0 0 35.500px;
  background: #fefefe;
`;
const CapitalLogo = styled.div`
  display: flex;
  gap: 7px;
  align-items: center;
  height: 28px;
  margin: 0 0 15.500px 26.500px;
  color: #0c0c0c;
  p { font: 700 14px/15px "Noto Sans CJK SC", sans-serif; }
  small { display: block; font: 600 7.100px/9px Inter, sans-serif; letter-spacing: 0.300px; }
`;
const FormRow = styled.div<{ $gap: number }>`
  display: flex;
  align-items: center;
  margin-bottom: ${(p) => p.$gap}px;
  height: 14.500px;
  font: 500 8px/1 "Noto Sans CJK SC", sans-serif;
  color: #222;
`;
const Field = styled.div`
  width: 115px;
  height: 14.500px;
  margin: 0 3.500px 0 5px;
  padding: 0 4.500px 0 8px;
  display: flex;
  align-items: center;
  justify-content: space-between;
  border: 1px solid #c4c4c4;
  background: #fff;
  font-size: 7px;
  font-weight: 400;
  color: #666;
`;
const Forgot = styled.a`
  font: 500 7.100px/1 "Noto Sans", "Noto Sans CJK SC", sans-serif;
  color: #1c6f98;
`;
const Caret = () => <svg width="5" height="5" viewBox="0 0 5 5" fill="#777"><path d="M0 0h5L2.500 5z" /></svg>;

const WindowPanel = () => (
  <Panel $w={345.500} $h={230.500} $bg="#fefefe">
    <WindowBar>
      第一创业证券 Multicharts
      <svg width="24" height="6" viewBox="0 0 24 6" stroke="#777" strokeWidth="1"><path d="M0 3h5M10 3h5M12.500.5v5M19.500 1l4 4M23.500 1l-4 4" /></svg>
    </WindowBar>
    <WindowBody>
      <BrandSide>
        <svg width="42" height="42" viewBox="0 0 42 42">
          <defs>
            <linearGradient id="mg" x1="0" y1="0" x2="1" y2="1"><stop offset="0" stopColor="#2d8a3a" /><stop offset=".5" stopColor="#7cc043" /><stop offset="1" stopColor="#2d7f3a" /></linearGradient>
            <linearGradient id="mo" x1="0" y1="0" x2="1" y2="0.700"><stop offset="0" stopColor="#e8421e" /><stop offset=".5" stopColor="#f5841f" /><stop offset="1" stopColor="#ffd01e" /></linearGradient>
            <linearGradient id="mb" x1="0" y1="1" x2="1" y2="0"><stop offset="0" stopColor="#2d8bd0" /><stop offset="1" stopColor="#6cc0ee" /></linearGradient>
          </defs>
          <path fill="url(#mg)" d="M14 4C4 8 0 14 0 21.500S5 35.500 14 38.500L21 32C16 27 16 21 18 16c2-4 2.500-8 1.500-11.500-1 2.500-2 4.500-3.500 6.500.5-3 0-5-2-7Z" />
          <path fill="url(#mo)" d="M12 2.500C22-2 34 0 37 11l4.500-3L41 19.500c-5 .5-10-1-13.500-4L32 14C29 7 23 5 17 7c-1-2-2.500-3.500-5-4.500Z" />
          <path fill="url(#mb)" d="M11.500 39.500c5-.5 7.500-3 8.500-6 5 0 9-2 10.500-5.500L26 26.500c4-3 9.500-4 15.500-3C43 36 29 46 11.500 39.500Z" />
          <path d="M19 2.500c8-.5 13 4 15.500 12M34.500 14.500l1.500-4M34.500 14.500l-4-2.500M18 38c9-1 15-5 19-12M37 26l-4.500 1.500M37 26l1 4M13 9C7 15 5 24 9 34" fill="none" stroke="#fff" strokeWidth="1" opacity=".85" />
        </svg>
        <BrandName><b>MULTI</b>CHARTS</BrandName>
        <BrandTag>Raising The Trading Standard</BrandTag>
      </BrandSide>
      <FormSide>
        <CapitalLogo>
          <svg width="27" height="27" viewBox="0 0 27 27">
            <defs><radialGradient id="cg" cx=".6" cy=".35" r=".7"><stop offset="0" stopColor="#5cb5ea" /><stop offset=".6" stopColor="#1e6fbd" /><stop offset="1" stopColor="#123f8c" /></radialGradient></defs>
            <circle cx="13.500" cy="13.500" r="13" fill="url(#cg)" />
            <path d="M1.500 8C5 2 13 2 17 4.500c-4 .3-6 1.500-8 3.200 3-.7 5-.7 7 .3-4 .7-6 2.500-7 5.500s0 6 4.500 9C8 22 5.500 19 5 16l-2 2.500c0-3 1-4.500 2.500-6.500L2 14l3-4.500-3 1Z" fill="#fff" opacity=".92" />
          </svg>
          <div><p>第一创业</p><small>FIRST CAPITAL</small></div>
        </CapitalLogo>
        <FormRow $gap={8.500}>券商<Field>一创仿真<Caret /></Field></FormRow>
        <FormRow $gap={14}>连线<Field>一创仿真电信<Caret /></Field></FormRow>
        <FormRow $gap={7.500}>帐号<Field /></FormRow>
        <FormRow $gap={0}>密码<Field /><Forgot>忘记密码?</Forgot></FormRow>
      </FormSide>
    </WindowBody>
  </Panel>
);

/* ---------- 8: landscape notice ---------- */

const NoticeBody = styled.div`
  position: relative;
  z-index: 2;
  flex: 1;
  display: flex;
  flex-direction: column;
  align-items: center;
  padding-top: 50px;
  gap: 6px;
  font-size: 7.800px;
  color: #c6c6c6;
`;
const Note = styled.span`
  position: absolute;
  left: 9px;
  top: 13px;
  font-size: 5px;
  color: #eee;
`;
const LandscapePanel = () => (
  <Panel $w={310} $h={155} $ml={-218.500} $mt={165.300} $bg="#262626">
    <Rule $v $x={154.500} $y={0} $len={155} $c="#37598c" />
    <Tag $x={6.500} $y={5} $w={27} $h={6} $bg="#08c43f" $size={5}>■ #333333</Tag>
    <Note>Height:380px</Note>
    <Tag $x={147.500} $y={21} $w={14.500} $h={7} $bg="#4a80cf" $size={5}>115px</Tag>
    <Tag $x={148} $y={41.500} $w={13} $h={6.500} $bg="#f50008" $size={5}>100px</Tag>
    <Rule $x={133} $y={48.500} $len={43} $c="#c21216" />
    <Rule $v $x={179.500} $y={49.500} $len={43} $c="#c21216" />
    <Tag $x={179} $y={68} $w={13} $h={6.500} $bg="#f50008" $size={5}>100px</Tag>
    <Rule $v $x={160.500} $y={93} $len={6} $c="#08c43f" />
    <Tag $x={163} $y={92.500} $w={12.500} $h={6.500} $bg="#08c43f" $size={5}>12px</Tag>
    <Tip $x={103.500} $y={109} $w={39} $h={16} $size={4.700} $bg="#f50008" $tx={32}><span>size: 18px</span><span>color: #CCCCCC</span></Tip>
    <Tag $x={147.500} $y={121} $w={15} $h={7} $bg="#4a80cf" $size={5}>346px</Tag>
    <NoticeBody>
      <svg width="44" height="43" viewBox="0 0 44 43" fill="none" stroke="#606060" strokeWidth="2.600">
        <path d="M20.500 18V4q0-2.500 2.500-2.500h17q2.500 0 2.500 2.500v15" />
        <path d="M2.500 16C2.500 9 6 5 12 4" />
        <path d="M10.500 0 16 3.500 11.500 7.500Z" fill="#606060" stroke="none" />
        <rect x="1.300" y="20" width="41.400" height="21.700" rx="1.500" fill="#262626" />
        <path d="M22 25.500 28.500 37h-13Z" fill="#f8cf0b" stroke="#f8cf0b" strokeWidth="2" strokeLinejoin="round" />
        <path d="M22 28v5M22 34.500V36.500" stroke="#222" strokeWidth="1.800" />
      </svg>
      系统不支援橫式浏览
    </NoticeBody>
  </Panel>
);

/* ---------- 9: settings ---------- */

const StatusBar = styled.div<{ $h: number; $size: number; $pad: string }>`
  flex: none;
  position: relative;
  display: grid;
  grid-template-columns: 1fr auto 1fr;
  align-items: center;
  height: ${(p) => p.$h}px;
  padding: ${(p) => p.$pad};
  background: #000;
  color: #f0f0f0;
  font-size: ${(p) => p.$size}px;
  b { font-weight: 600; }
`;
const StatusSide = styled.span<{ $end?: boolean; $gap: number }>`
  display: flex;
  align-items: center;
  justify-content: ${(p) => (p.$end ? "flex-end" : "flex-start")};
  gap: ${(p) => p.$gap}px;
`;
const SettingsHead = styled.div`
  flex: none;
  height: 43.500px;
  display: flex;
  justify-content: space-between;
  align-items: flex-start;
  padding: 7.500px 4.500px 0 7.500px;
  background: #232323;
`;
const SettingsTitle = styled.h2`
  width: 43px;
  height: 33px;
  display: grid;
  place-items: center;
  border: 1.500px solid #ad6a1c;
  background: linear-gradient(#232326, #060606);
  color: #fff;
  font-size: 16.200px;
`;
const Switcher = styled.button`
  width: 79.500px;
  height: 27px;
  margin-top: 1px;
  padding: 0;
  border: 0;
  border-radius: 3px;
  background: #2ccb72;
  color: #fff;
  font: 13.600px/1 "Noto Sans CJK SC", sans-serif;
  letter-spacing: 0.100px;
  display: flex;
  align-items: center;
  justify-content: center;
  small { font-size: 12px; }
`;
const SectionHead = styled.div`
  flex: none;
  height: 34.500px;
  display: flex;
  align-items: center;
  gap: 6px;
  padding: 2px 0 0 3px;
  background: #1a1a1a;
  border-top: 1px solid #353535;
  border-bottom: 1px solid #353535;
  color: #f2f2f2;
  font-size: 16.600px;
`;
const UserRow = styled.div`
  flex: none;
  height: 91.500px;
  display: flex;
  padding: 11.500px 6px 0 6.500px;
`;
const Avatar = styled.div`
  width: 56px;
  height: 56px;
  margin-top: 4.500px;
  border-radius: 50%;
  background: #fff;
  display: grid;
  place-items: center;
`;
const UserInfo = styled.div`
  flex: 1;
  padding: 17px 0 0 12.500px;
  font-size: 13px;
  color: #ccc;
  p { font: 13px/13px "Noto Sans", sans-serif; color: #fff; letter-spacing: 0.620px; margin-left: 1px; }
  div { display: flex; align-items: center; gap: 1px; margin-top: 4.500px; height: 16px; }
`;
const UserActions = styled.div`
  width: 85px;
  display: flex;
  flex-direction: column;
  gap: 8px;
`;
const BigButton = styled.button<{ $red?: boolean }>`
  height: 31px;
  padding: 0;
  border: 0;
  background: ${(p) => (p.$red ? "#bb3628" : "linear-gradient(#333, #424242)")};
  color: #f2f2f2;
  font: 13.700px/1 "Noto Sans CJK SC", sans-serif;
`;
const Options = styled.div`
  display: flex;
  flex-direction: column;
  gap: 14px;
  padding: 11.500px 6px 0;
`;
const OptionRow = styled.div`
  height: 31px;
  display: flex;
  align-items: center;
  justify-content: space-between;
  > span { padding-top: 4px; font-size: 13.800px; color: #c9c9c9; }
`;
const Segments = styled.div`
  display: flex;
  width: 217px;
  height: 31px;
`;
const Segment = styled.span<{ $on?: boolean }>`
  flex: 1;
  display: grid;
  place-items: center;
  padding-top: 1px;
  font-size: 13.500px;
  color: #f4f4f4;
  background: ${(p) => (p.$on ? "#ff7800" : "linear-gradient(#434343, #323232)")};
`;
const SettingsPanel = () => (
  <Panel $w={317.500} $h={319.500} $ml={14} $mt={0.700} $bg="#191919">
    <StatusBar $h={17.500} $size={10} $pad="0 6px 0 5px">
      <StatusSide $gap={3.500}><Signal s={4.700} />中華電信<Wifi s={11} /></StatusSide>
      <b>14:22</b>
      <StatusSide $end $gap={4.500}>
        <LockRing s={9} />
        <svg width="8" height="8" viewBox="0 0 8 8" fill="#eee"><path d="M8 0 5 8 4 4 0 3.300Z" /></svg>
        <Alarm s={9} />94%<Battery w={18} />
      </StatusSide>
    </StatusBar>
    <SettingsHead><SettingsTitle>设定</SettingsTitle><Switcher>模拟账号<small>▼</small></Switcher></SettingsHead>
    <SectionHead><ArrowRing s={23} w={2} />使用者资讯</SectionHead>
    <UserRow>
      <Avatar><WeChat s={36} bubble="#4bb11e" eye="#fff" /></Avatar>
      <UserInfo>
        <p>1234567890ABCDE</p>
        <div><Star s={12} />未绑定</div>
      </UserInfo>
      <UserActions><BigButton>帐号管理</BigButton><BigButton $red>登出会员</BigButton></UserActions>
    </UserRow>
    <SectionHead><ArrowRing s={23} w={2} />系统设定</SectionHead>
    <Options>
      <OptionRow><span>报单音效</span><Segments><Segment $on>开启</Segment><Segment>关闭</Segment></Segments></OptionRow>
      <OptionRow><span>系统语系</span><Segments><Segment $on>简体</Segment><Segment>繁体</Segment></Segments></OptionRow>
    </Options>
    <Rule $v $x={6} $y={0} $len={320} $c="#2f6a6a" />
    <Rule $v $x={311} $y={0} $len={320} $c="#2f6a6a" />
    <Rule $x={7.500} $y={106.500} $len={56} />
    <Rule $v $x={68} $y={110} $len={58} />
    <Rule $v $x={209} $y={95} $len={92} />
    <Tag $x={23.500} $y={100.500} $w={25.500} $h={11} $bg="#fa2a00" $size={9}>128px</Tag>
    <Tag $x={56} $y={132} $w={25.500} $h={11} $bg="#fa2a00" $size={9}>128px</Tag>
    <Tag $x={196.500} $y={138.500} $w={26} $h={11} $bg="#fa2a00" $size={9}>210px</Tag>
    <Tag $x={224.500} $y={172.500} $w={36} $h={10} $bg="#fa2a00" $size={8.600}>#bb3628</Tag>
    <Tip $x={117.500} $y={92.500} $w={64} $h={27} $size={8.900} $tail="down"><span>size: 1 em</span><span>color: #FFFFFF</span></Tip>
    <Tip $x={120} $y={159} $w={70.500} $h={27.500} $size={8.900}><span>size: 1 em</span><span>color: #CCCCCC</span></Tip>
  </Panel>
);

/* ---------- 10: account management ---------- */

const TealBody = styled.div`
  flex: 1;
  display: flex;
  flex-direction: column;
  padding: 0 10px 10px;
  background: #119596;
`;
const DarkArea = styled.div`
  flex: 1;
  display: flex;
  flex-direction: column;
  background: #282828;
`;
const PhoneRow = styled.div`
  height: 25px;
  display: flex;
  align-items: center;
  gap: 8.500px;
  padding: 2px 0 0 1px;
  border-bottom: 1px solid #3a3a3a;
  font: 9.100px/1 "Noto Sans", sans-serif;
  letter-spacing: 0.680px;
  color: #d2d2d2;
`;
const Dialog = styled.div`
  height: 81px;
  margin: 45.500px -1px 0 -1.500px;
  padding-top: 26.500px;
  border: 1.300px solid #9c5214;
  border-radius: 4px;
  background: linear-gradient(#262626, #121212);
  text-align: center;
  font-size: 7.650px;
  color: #d4d4d4;
`;
const DialogButtons = styled.div`
  display: flex;
  justify-content: center;
  gap: 15px;
  margin-top: 15.500px;
`;
const DialogButton = styled.button<{ $bg: string }>`
  width: 45px;
  height: 18px;
  padding: 0;
  border: 0;
  border-radius: 1px;
  background: ${(p) => p.$bg};
  color: #fff;
  font: 500 6.600px/1 "Noto Sans CJK SC", sans-serif;
`;
const WideButton = styled.button<{ $red?: boolean }>`
  height: 22px;
  margin-top: ${(p) => (p.$red ? "10px" : "auto")};
  padding: ${(p) => (p.$red ? "0" : "1px 0 0")};
  border: 0;
  background: ${(p) => (p.$red ? "#ba3627" : "linear-gradient(#464646, #363636)")};
  color: #f5f5f5;
  font: 9.400px/1 "Noto Sans CJK SC", sans-serif;
`;
const ManagePanel = () => (
  <Panel $w={182} $h={323.500} $ml={14.500} $bg="#282828">
    <StatusBar $h={9} $size={5.600} $pad="0 3px">
      <StatusSide $gap={1.500}><Signal s={2.800} />中華電信<Wifi s={6} /></StatusSide>
      <b>14:28</b>
      <StatusSide $end $gap={2}><LockRing s={5.500} /><Alarm s={5.500} />93%<Battery w={12} /></StatusSide>
    </StatusBar>
    <Bar $h={25.500} $size={12.100} $pad="0 31px 0 5px">
      <BarButton $w={27} $h={17} $size={9.500}>返回</BarButton>
      <h2>策略星帐号管理</h2>
    </Bar>
    <TealBody>
      <DarkArea>
        <PhoneRow><Star s={15.500} />+886-0912345678</PhoneRow>
        <Dialog>
          帐号将还原至初始值，确定解除绑定？
          <DialogButtons>
            <DialogButton $bg="linear-gradient(#c81414, #960606)">取消</DialogButton>
            <DialogButton $bg="linear-gradient(#6cb71a, #549a0c)">确定</DialogButton>
          </DialogButtons>
        </Dialog>
        <WideButton>修改密码</WideButton>
      </DarkArea>
      <WideButton $red>解除绑定</WideButton>
    </TealBody>
    <Rule $v $x={144.500} $y={35} $len={25} />
    <Rule $v $x={7.500} $y={35} $len={25} $c="#5f6a66" />
    <Rule $v $x={7.500} $y={261} $len={21} $c="#5f6a66" />
    <Rule $v $x={7.500} $y={292} $len={21} $c="#5f6a66" />
    <Tag $x={12} $y={33.500} $w={12} $h={6} $size={4.800}>64px</Tag>
    <Tag $x={2} $y={43.500} $w={12} $h={6} $size={4.800}>64px</Tag>
    <Tag $x={137} $y={43} $w={15} $h={6.500} $size={5}>100px</Tag>
    <Tag $x={1} $y={267.500} $w={12.500} $h={6.500} $size={5}>84px</Tag>
    <Tag $x={1} $y={299} $w={12.500} $h={6.500} $size={5}>84px</Tag>
    <Tag $x={157.500} $y={283.500} $w={12.500} $h={6.500} $size={5}>40px</Tag>
    <Tag $x={157.500} $y={314.500} $w={12.500} $h={6.500} $size={5}>40px</Tag>
    <Tip $x={40.500} $y={56} $w={41} $h={16} $size={5}><span>size: 34px</span><span>color: #CCCCCC</span></Tip>
    <Tip $x={71.500} $y={247.500} $w={37} $h={16} $size={4.700} $tail="down"><span>size: 34px</span><span>color: #FFFFFF</span></Tip>
    <Tip $x={71.500} $y={279} $w={37} $h={16} $size={4.700} $tail="down"><span>size: 34px</span><span>color: #FFFFFF</span></Tip>
  </Panel>
);

export default function App() {
  return (
    <>
      <Global />
      <Page>
        <Grain width="1000" height="683">
          <filter id="grain" x="0" y="0" width="100%" height="100%">
            <feTurbulence type="fractalNoise" baseFrequency="0.75" numOctaves="2" seed="4" />
            <feColorMatrix values="1.1 0 0 0 0.2  1.1 0 0 0 0.2  1.1 0 0 0 0.2  0 0 0 0 0.16" />
          </filter>
          <rect width="1000" height="683" filter="url(#grain)" />
        </Grain>
        <Board>
          <Title><span>[Work collection]</span></Title>
          <Row $h={278}>
            <LoginPanel />
            <SharePanel />
            <ChartPanel />
            <StrategyPanel />
            <FieldPanel />
            <AccountPanel />
          </Row>
          <Row $h={331}>
            <WindowPanel />
            <LandscapePanel />
            <SettingsPanel />
            <ManagePanel />
          </Row>
        </Board>
      </Page>
    </>
  );
}
